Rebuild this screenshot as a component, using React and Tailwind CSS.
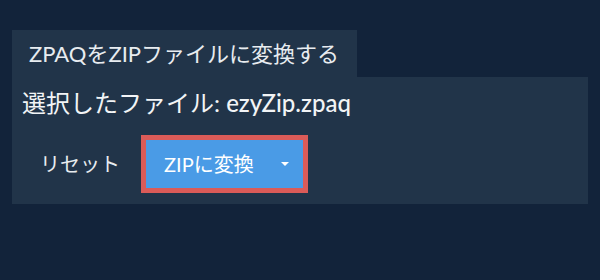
import React from 'react'

export default function App() {
  return (
    <div className="w-[600px] h-[280px] bg-[#12233a] pt-[30px] px-3" style={{ fontFamily: 'Lato, "Noto Sans CJK JP", sans-serif' }}>
      {/* tab */}
      <div className="inline-flex h-[47px] items-center bg-[#213449] pl-[17px] pr-[18px] text-[22px] text-[#e8ecf0]">
        ZPAQをZIPファイルに変換する
      </div>
      {/* panel */}
      <div className="w-[576px] h-[127px] bg-[#213449] pt-[11px]">
        <div className="pl-[10px] text-[24px] text-[#f2f4f6] leading-[30px]">
          選択したファイル: <span className="font-medium">ezyZip.zpaq</span>
        </div>
        <div className="flex items-center mt-[17px] pl-[16px]">
          <button className="h-[48px] px-3 text-[20px] text-[#e8ecf0]">リセット</button>
          <div className="ml-[9px] border-[5px] border-[#db5b58] flex">
            <button className="flex items-center h-[48px] w-[157px] bg-[#4a9be6] text-[20px] text-white pl-[18px]">
              ZIPに変換
              <span className="ml-auto mr-[14px] w-0 h-0 border-l-[4px] border-r-[4px] border-t-[4px] border-l-transparent border-r-transparent border-t-white"></span>
            </button>
          </div>
        </div>
      </div>
    </div>
  )
}
